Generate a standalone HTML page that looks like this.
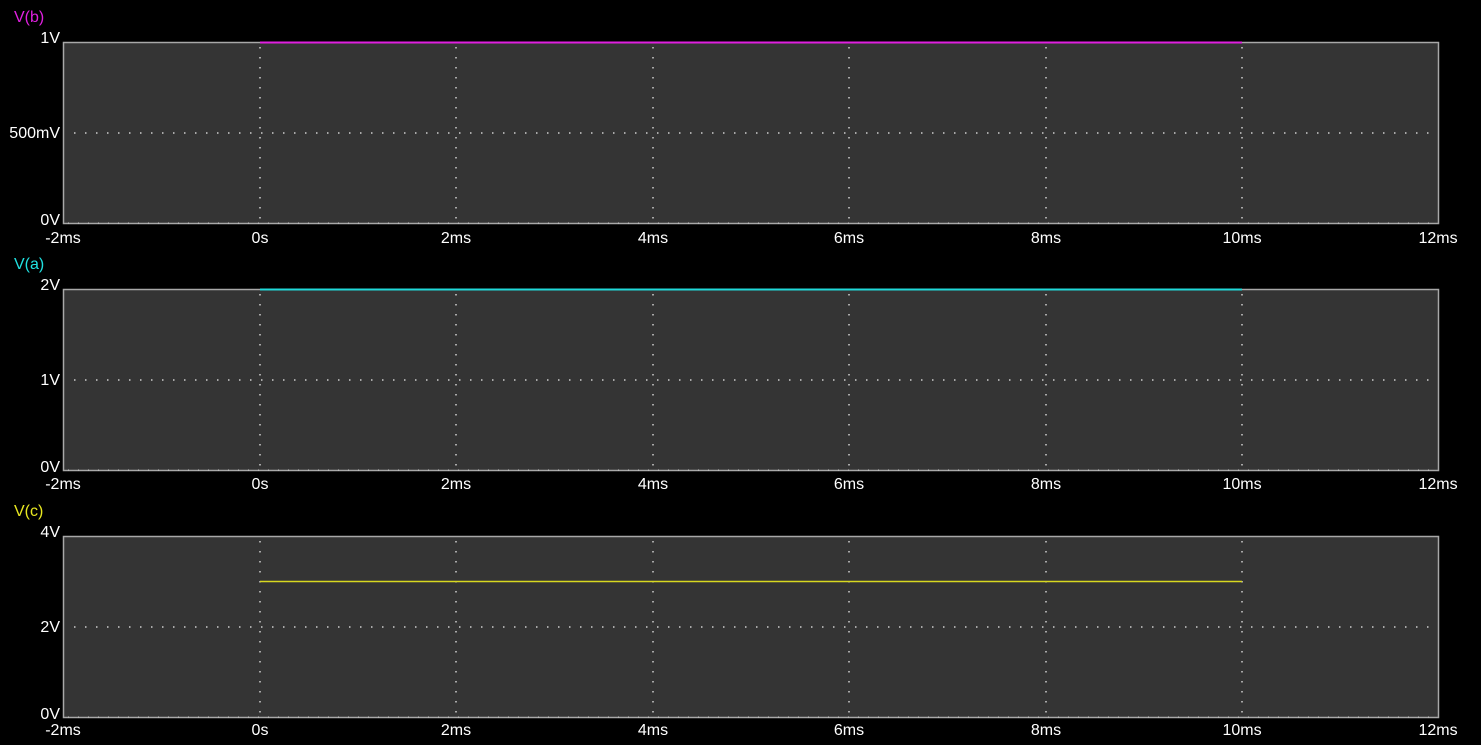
<!DOCTYPE html>
<html><head><meta charset="utf-8"><style>
html,body{margin:0;padding:0;background:#000;width:1481px;height:745px;overflow:hidden}
svg{display:block}
text{font-family:"Liberation Sans",sans-serif;font-size:16px;fill:#fff}
</style></head><body>
<svg width="1481" height="745" xmlns="http://www.w3.org/2000/svg">
<defs>
<g id="grid">
<rect x="63.5" y="0.5" width="1375" height="181" fill="#343434" stroke="#a8a8a8" stroke-width="1.5"/>
<g stroke="#cfcfcf" stroke-width="1.5" stroke-dasharray="1.5 8.5">
<line x1="260" y1="5" x2="260" y2="181"/>
<line x1="456" y1="5" x2="456" y2="181"/>
<line x1="653" y1="5" x2="653" y2="181"/>
<line x1="849" y1="5" x2="849" y2="181"/>
<line x1="1046" y1="5" x2="1046" y2="181"/>
<line x1="1242" y1="5" x2="1242" y2="181"/>
</g>
<g stroke="#cfcfcf" stroke-width="1.5" stroke-dasharray="1.5 9.5">
<line x1="74" y1="91" x2="1438" y2="91"/>
</g>
<g stroke="#cfcfcf" stroke-width="1" stroke-dasharray="1 9">
<line x1="68" y1="181" x2="1438" y2="181"/>
</g>
</g>
<g id="xl">
<text x="63" text-anchor="middle">-2ms</text>
<text x="260" text-anchor="middle">0s</text>
<text x="456" text-anchor="middle">2ms</text>
<text x="653" text-anchor="middle">4ms</text>
<text x="849" text-anchor="middle">6ms</text>
<text x="1046" text-anchor="middle">8ms</text>
<text x="1242" text-anchor="middle">10ms</text>
<text x="1438" text-anchor="middle">12ms</text>
</g>
</defs>

<text x="14" y="22" style="fill:#e020e0">V(b)</text>
<use href="#grid" transform="translate(0,42)"/>
<line x1="260" y1="42.5" x2="1242" y2="42.5" stroke="#e020e0" stroke-width="2"/>
<text x="60" y="43" text-anchor="end">1V</text>
<text x="60" y="138" text-anchor="end">500mV</text>
<text x="60" y="225" text-anchor="end">0V</text>
<use href="#xl" transform="translate(0,243)"/>

<text x="14" y="269" style="fill:#20e0e0">V(a)</text>
<use href="#grid" transform="translate(0,289)"/>
<line x1="260" y1="289.5" x2="1242" y2="289.5" stroke="#20d8d8" stroke-width="2"/>
<text x="60" y="290" text-anchor="end">2V</text>
<text x="60" y="385" text-anchor="end">1V</text>
<text x="60" y="472" text-anchor="end">0V</text>
<use href="#xl" transform="translate(0,489)"/>

<text x="14" y="516" style="fill:#e8e820">V(c)</text>
<use href="#grid" transform="translate(0,536)"/>
<line x1="260" y1="581.5" x2="1242" y2="581.5" stroke="#d8d820" stroke-width="1.5"/>
<text x="60" y="537" text-anchor="end">4V</text>
<text x="60" y="632" text-anchor="end">2V</text>
<text x="60" y="719" text-anchor="end">0V</text>
<use href="#xl" transform="translate(0,735)"/>
</svg>
</body></html>
